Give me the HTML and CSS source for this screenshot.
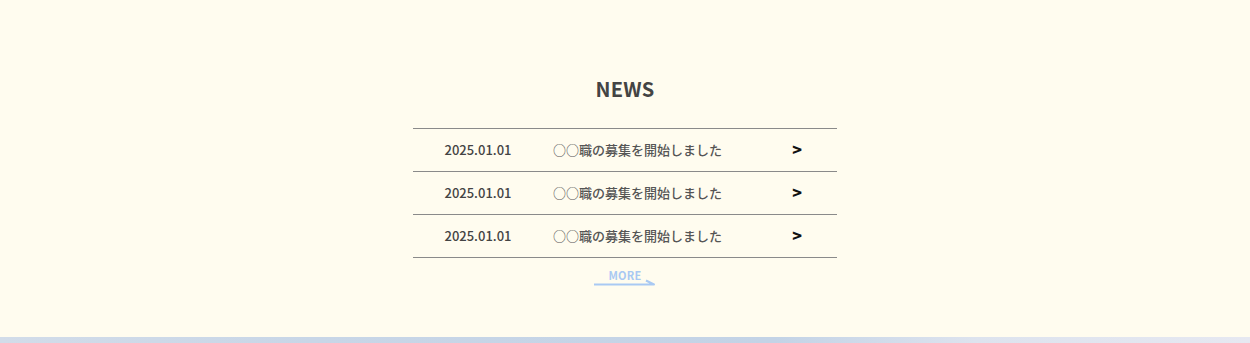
FILE: index.html
```html
<!DOCTYPE html>
<html lang="ja">
<head>
<meta charset="utf-8">
<meta name="viewport" content="width=device-width,initial-scale=1">
<title>NEWS</title>
<link rel="stylesheet" href="styles.css">
</head>
<body>

<section class="news">
  <h2 class="news-title">NEWS</h2>

  <ul class="news-list">
    <li class="news-item">
      <span class="news-date">2025.01.01</span>
      <span class="news-text">○○職の募集を開始しました</span>
      <span class="news-arrow">&gt;</span>
    </li>
    <li class="news-item">
      <span class="news-date">2025.01.01</span>
      <span class="news-text">○○職の募集を開始しました</span>
      <span class="news-arrow">&gt;</span>
    </li>
    <li class="news-item">
      <span class="news-date">2025.01.01</span>
      <span class="news-text">○○職の募集を開始しました</span>
      <span class="news-arrow">&gt;</span>
    </li>
  </ul>

  <a class="more" href="#">
    <span class="more-label">MORE</span>
    <svg class="more-line" width="62" height="8" viewBox="0 0 62 8">
      <path d="M0 6.5H60L52 2.5" fill="none" stroke="#a9c9f3" stroke-width="2" stroke-linejoin="round"/>
    </svg>
  </a>
</section>

<div class="band"></div>

</body>
</html>
```

FILE: styles.css
```css
/* ── base ─────────────────────────────────────── */
*{box-sizing:border-box}
body{margin:0;background:#fffcef;color:#444;
     font-family:"Noto Sans CJK JP","Noto Sans",sans-serif}

/* ── news block ───────────────────────────────── */
.news{height:337px;padding-top:74px;display:flex;flex-direction:column;align-items:center}
.news-title{margin:0 0 24px;font-size:20px;line-height:30px;font-weight:700;color:#444;letter-spacing:.01em}

.news-list{list-style:none;margin:0;padding:0;width:424px;border-bottom:1px solid #8a8a8a}
.news-item{display:flex;align-items:center;height:43px;padding-bottom:2px;border-top:1px solid #8a8a8a;
           font-size:13px;font-weight:500}
.news-date{flex:0 0 130px;text-align:center;color:#444}
.news-text{flex:1;margin-left:10px;color:#555}
.news-arrow{flex:0 0 80px;text-align:center;font-weight:900;color:#111;font-size:16px}

/* ── more link ────────────────────────────────── */
.more{display:flex;flex-direction:column;align-items:center;width:62px;margin-top:10px;text-decoration:none}
.more-label{font-size:11px;line-height:14px;font-weight:700;color:#a9c9f3;letter-spacing:.02em}
.more-line{display:block;margin-top:-4px}

/* ── bottom band ──────────────────────────────── */
.band{height:6px;
      background:linear-gradient(90deg,#d2dce9 0%,#c8d6e7 25%,#c3d3e6 62%,#dde3ee 78%,#e6e8f1 100%)}
```
